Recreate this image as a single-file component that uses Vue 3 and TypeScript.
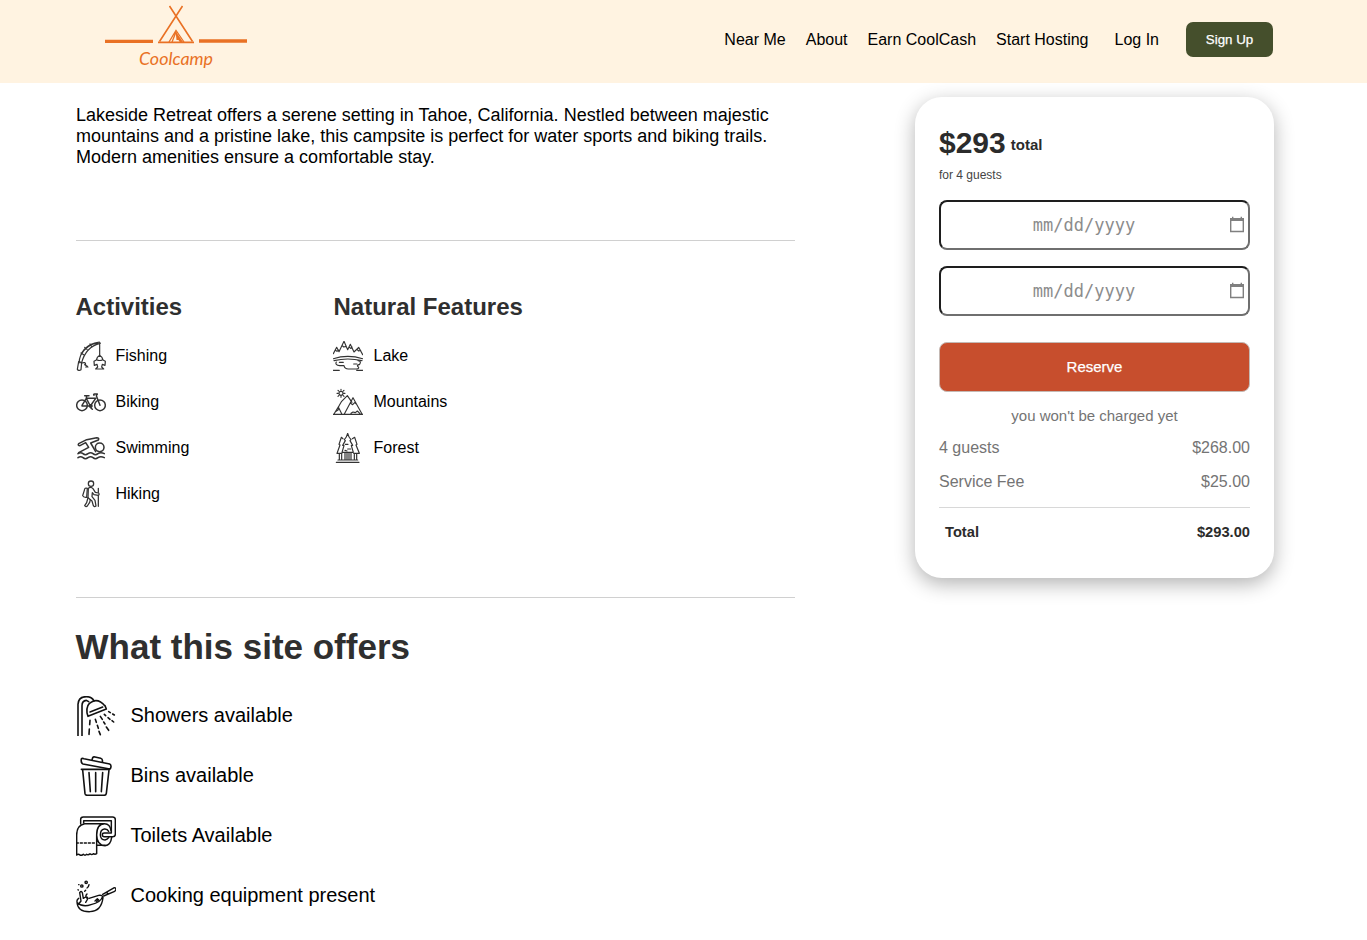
<script setup lang="ts">
interface Item {
  label: string
  box: string
  weight: number
  paths: string[]
}

const links: string[] = ['Near Me', 'About', 'Earn CoolCash', 'Start Hosting']

const activities: Item[] = [
  {
    label: 'Fishing',
    box: '18 18 90 90',
    weight: 3.6,
    paths: [
      'M27 84 C29 56 45 26 88 21 L91 25 C60 32 42 54 34 86 M33 60 C44 40 62 27 84 24 M33 54 l8 5 M44 37 l7 6 M60 27 l4 6 M89 24 V60',
      'M26 80 l9 3 -2 21 q-7 5 -11 -1 Z M36 84 q10 -4 11 4 M44 89 l8 5 M47 96 h7',
      'M89 61 q-8 5 -10 14 l-7 4 1 12 8 -3 2 8 -6 6 h24 l-6 -6 2 -8 8 3 1 -12 -7 -4 q-2 -9 -10 -14 Z M80 74 q9 5 18 0',
    ],
  },
  {
    label: 'Biking',
    box: '18 156 90 90',
    weight: 4.4,
    paths: [
      'M52 211 a16 16 0 1 1 -32 0 a16 16 0 1 1 32 0 M106 211 a16 16 0 1 1 -32 0 a16 16 0 1 1 32 0',
      'M36 211 L49 190 L61 213 H36 M49 190 H77 L61 213 M44 182 h13 M50 182 l-1 8 M74 177 h8 l-3 5 11 29 M74 177 q-5 1 -2 4 M62 209 a4 4 0 1 0 .1 0 M62 218 l5 5',
    ],
  },
  {
    label: 'Swimming',
    box: '18 24 90 90',
    weight: 4.6,
    paths: [
      'M102 67 a13 13 0 1 1 -26 0 a13 13 0 1 1 26 0',
      'M26 83 L56 67 L47 53 L30 62 Q22 62 26 56 L50 44 L80 38 Q89 39 85 45 L62 54 L77 80',
      'M24 86 q8 -6 15 0 t15 0 t15 0 t15 0 t19 0 M24 98 q8 -6 15 0 t15 0 t15 0 t15 0 t19 0',
    ],
  },
  {
    label: 'Hiking',
    box: '18 162 90 90',
    weight: 3.8,
    paths: [
      'M71 176 a8 8 0 1 1 -16 0 a8 8 0 1 1 16 0',
      'M55 190 q8 -6 14 1 l7 11 10 2 q3 5 -1 7 l-13 -2 -5 -6 -1 12 9 11 3 17 q-5 4 -8 -1 l-4 -14 -12 -10 Z',
      'M52 190 q-8 -3 -9 6 l-5 16 q2 6 12 5 Z M54 218 l-4 15 -6 9 q4 5 8 1 l7 -11 2 -8 M85 190 V202 M85 213 V244',
    ],
  },
]

const features: Item[] = [
  {
    label: 'Lake',
    box: '24 18 90 90',
    weight: 3.4,
    paths: [
      'M25 56 L35 37 L42 50 L57 19 L68 44 L76 28 L87 51 L101 37 L113 59 M31 46 l5 3 5 -4 M51 31 l5 5 8 -2 M72 36 l5 4 4 -4 M96 43 l5 5 6 -2',
      'M25 71 Q68 57 113 71 M27 77 Q68 67 111 77',
      'M34 81 q-5 9 10 11 h13 q2 10 13 10 h24 q11 -1 5 -7 q-5 -4 5 -7 q6 -10 -5 -11 M43 82 h12 M86 87 h10 M25 106 h18 M95 106 h18',
    ],
  },
  {
    label: 'Mountains',
    box: '24 156 90 90',
    weight: 3.4,
    paths: [
      'M24 238 H113 M27 237 L43 211 L50 199 L67 182 L81 202 M58 237 L84 188 L111 237 M40 216 l10 20 M31 230 l9 -6 M76 204 l7 5 6 -6 6 5 M78 235 l6 -4 7 2 6 -5 8 8',
      'M54 175 a6 6 0 1 1 -12 0 a6 6 0 1 1 12 0 M48 163 v3 M48 184 v3 M36 175 h3 M57 175 h3 M39 166 l2 2 M55 182 l2 2 M57 166 l-2 2 M41 182 l-2 2',
    ],
  },
  {
    label: 'Forest',
    box: '24 294 90 90',
    weight: 3.6,
    paths: [
      'M68 295 Q65 307 58 314 l3 3 -8 14 4 1 -6 20 H85 l-6 -20 4 -1 -8 -14 3 -3 Q71 307 68 295 Z',
      'M54 311 l-5 -4 -7 21 3 2 -9 25 H51 M82 311 l7 -4 7 21 -3 2 10 25 H86',
      'M34 382 H102 M39 375 H98 M43 358 v17 M50 358 v17 M60 354 v21 M66 354 v21 M72 354 v21 M78 354 v21 M88 358 v17 M95 358 v17 M61 328 h8 M68 342 h9 M60 346 l6 2',
    ],
  },
]

const offers: Item[] = [
  {
    label: 'Showers available',
    box: '18 18 120 120',
    weight: 4.8,
    paths: [
      'M24 137 V43 Q25 20 49 20 Q66 20 72 33 M36 137 V47 Q36 32 49 31 L56 35',
      'M51 69 Q48 42 66 35 Q86 25 105 48 M60 66 L98 51 M51 69 L54 79 L109 57 L105 47',
      'M60 91 l-1 13 M58 117 l-1 16 M76 88 l3 9 M82 106 l3 9 M87 124 l4 10 M91 79 l6 9 M101 96 l4 6 M109 111 l7 10 M103 73 l4 4 M114 83 l6 5 M126 92 l5 4 M116 65 l5 3 M128 72 l5 3',
    ],
  },
  {
    label: 'Bins available',
    box: '18 198 120 120',
    weight: 4.8,
    paths: [
      'M34 207 Q36 204 42 206 L119 222 Q125 225 122 234 Q121 238 115 236 L39 222 Q32 219 34 207 Z',
      'M66 210 l2 -7 q2 -3 7 -2 l17 4 q7 2 5 11 M34 238 H119 M38 240 L45 311 Q46 316 52 316 H102 Q108 316 109 310 L117 240',
      'M57 248 L61 305 M77 248 V305 M98 248 L94 305',
    ],
  },
  {
    label: 'Toilets Available',
    box: '18 33 120 120',
    weight: 4.4,
    paths: [
      'M32 57 V43 Q32 36 40 36 H128 Q136 36 136 44 V88 Q136 95 128 95 H103 Q97 95 97 89 Q97 84 103 84 H124 V47 H41 V54',
      'M104 56 H44 Q20 60 20 90 V150 q5 -5 10 0 q5 3 10 -2 q5 5 10 0 q5 3 10 -2 q5 5 10 0 q5 3 10 0 V90 M20 114 h5 M31 114 h6 M43 114 h6 M55 114 h6 M67 114 h6 M80 90 Q80 56 104 56 Q120 56 123 77 M80 90 Q81 121 105 122 Q122 121 125 97 M80 121 H105',
      'M116 79 Q112 71 103 72 Q91 74 91 90 Q92 105 105 105 Q112 104 116 98',
    ],
  },
  {
    label: 'Cooking equipment present',
    box: '18 213 120 120',
    weight: 4.2,
    paths: [
      'M21 290 Q22 321 60 320 Q94 319 99 278 Q98 269 86 271 L57 280 M21 290 Q20 284 26 280 M22 293 Q38 308 63 299 Q93 292 98 274',
      'M98 268 L133 248 Q138 248 138 255 L134 259 L101 273 M110 261 l4 6',
      'M26 297 l7 -9 -4 -25 q5 -7 8 0 l3 17 7 -4 q7 -1 6 6 l-6 10 M51 267 q-7 7 0 13 M52 232 a3.5 3.5 0 1 1 -7 0 a3.5 3.5 0 1 1 7 0 M39 243 a3.5 3.5 0 1 1 -7 0 a3.5 3.5 0 1 1 7 0 M26 239 h1 M57 239 q-1 7 -6 10 M44 259 l3 -3 M24 254 l1 1 M75 288 l7 -7 4 4 -6 4',
    ],
  },
]

const dates: string[] = ['check-in', 'check-out']
</script>

<template>
  <div class="page">
    <header class="header">
      <svg class="logo" width="150" height="83" viewBox="0 0 150 83">
        <g fill="none" stroke="#e97124">
          <path d="M4 41.4 H52 M98 41 H146" stroke-width="3.4" />
          <path d="M68.5 6 L91.5 41.5 M81.5 6 L58.5 41.5" stroke-width="1.6" />
          <path d="M57 42.4 H93" stroke-width="1.9" />
          <path d="M68 42 L75 30.5 L83 42 M71 42 L75 32" stroke-width="1.3" />
        </g>
        <path d="M74.5 31 L75.5 40 L77.5 40 L79 42.5 L82 42 Z" fill="#e97124" />
        <text x="38" y="65" textLength="74" lengthAdjust="spacingAndGlyphs">Coolcamp</text>
      </svg>
      <nav class="nav">
        <a v-for="link in links" :key="link">{{ link }}</a>
        <a class="login">Log In</a>
        <button class="signup">Sign Up</button>
      </nav>
    </header>

    <main class="main">
      <div class="details">
        <p class="about">
          Lakeside Retreat offers a serene setting in Tahoe, California. Nestled between majestic<br />
          mountains and a pristine lake, this campsite is perfect for water sports and biking trails.<br />
          Modern amenities ensure a comfortable stay.
        </p>
        <div class="columns">
          <section class="column">
            <h2>Activities</h2>
            <div v-for="item in activities" :key="item.label" class="small-item">
              <svg width="30" height="30" :viewBox="item.box" :stroke-width="item.weight">
                <path v-for="d in item.paths" :key="d" :d="d" />
              </svg>
              <span>{{ item.label }}</span>
            </div>
          </section>
          <section class="column">
            <h2>Natural Features</h2>
            <div v-for="item in features" :key="item.label" class="small-item shifted">
              <svg width="30" height="30" :viewBox="item.box" :stroke-width="item.weight">
                <path v-for="d in item.paths" :key="d" :d="d" />
              </svg>
              <span>{{ item.label }}</span>
            </div>
          </section>
        </div>
        <section class="offers">
          <h1>What this site offers</h1>
          <div v-for="item in offers" :key="item.label" class="offer">
            <svg width="40" height="40" :viewBox="item.box" :stroke-width="item.weight">
              <path v-for="d in item.paths" :key="d" :d="d" />
            </svg>
            <span>{{ item.label }}</span>
          </div>
        </section>
      </div>

      <aside class="card">
        <div class="price"><strong>$293</strong><b>total</b></div>
        <div class="for">for 4 guests</div>
        <div v-for="name in dates" :key="name" class="date">
          <span>mm/dd/yyyy</span>
          <svg width="16" height="18" viewBox="0 0 16 18">
            <path d="M1.7 4 H14.3 V15.5 H1.7 Z" fill="none" stroke="#808080" stroke-width="1.4" />
            <path d="M1 2 H15 V5 H1 Z M3 .8 H4.4 V3 H3 Z M11.6 .8 H13 V3 H11.6 Z" fill="#808080" />
          </svg>
        </div>
        <button class="reserve">Reserve</button>
        <div class="note">you won't be charged yet</div>
        <div class="row"><span>4 guests</span><span>$268.00</span></div>
        <div class="row"><span>Service Fee</span><span>$25.00</span></div>
        <div class="total"><span>Total</span><span>$293.00</span></div>
      </aside>
    </main>
  </div>
</template>

<style>
html,
body {
  margin: 0;
  background: #fff;
  overflow: hidden;
}
</style>

<style scoped>
.page {
  width: 1367px;
  height: 940px;
  overflow: hidden;
  background: #fff;
  color: #000;
  font-family: "Liberation Sans", Arial, sans-serif;
  font-size: 16px;
}
.header {
  display: flex;
  justify-content: space-between;
  height: 83px;
  box-sizing: border-box;
  padding: 0 94px 0 101px;
  background: #fff3e1;
}
.logo {
  display: block;
}
.logo text {
  fill: #e97124;
  font: italic 18px Lato, sans-serif;
}
.nav {
  display: flex;
  align-items: center;
  gap: 20px;
  height: 79px;
}
.login {
  margin-left: 6px;
}
.signup {
  width: 87px;
  height: 35px;
  margin-left: 7px;
  padding: 0;
  border: 0;
  border-radius: 7px;
  background: #454f2c;
  color: #fff;
  font: 13.333px "Liberation Sans", Arial, sans-serif;
  -webkit-text-stroke: 0.25px #fff;
}
.main {
  display: flex;
  align-items: flex-start;
  justify-content: space-between;
  padding: 14px 93px 0 76px;
}
.details {
  width: 719px;
}
.about {
  height: 135px;
  margin: 0;
  padding-top: 8px;
  border-bottom: 1px solid #d0d0d0;
  font-size: 18px;
  line-height: 21px;
  text-indent: -0.5px each-line;
  white-space: nowrap;
}
.columns {
  display: flex;
  height: 304px;
  padding-top: 52px;
  border-bottom: 1px solid #d0d0d0;
}
.column {
  width: 258px;
}
h1,
h2 {
  margin: 0;
  color: #2f2f2f;
  text-indent: -0.5px;
}
h2 {
  margin-bottom: 20px;
  font-size: 24px;
  line-height: 28px;
  white-space: nowrap;
}
.small-item {
  display: flex;
  align-items: center;
  gap: 9.5px;
  height: 30px;
  margin-bottom: 16px;
}
.shifted {
  gap: 10.5px;
  margin-left: -1px;
}
.small-item svg,
.offer svg {
  display: block;
  flex: none;
  fill: none;
  stroke: #333;
  stroke-linecap: round;
  stroke-linejoin: round;
}
.offers {
  padding-top: 28px;
}
h1 {
  margin-bottom: 28px;
  font-size: 35px;
  line-height: 42px;
}
.offer {
  display: flex;
  align-items: center;
  gap: 14.5px;
  height: 40px;
  margin-bottom: 20px;
  font-size: 20px;
}
.offer span {
  padding-bottom: 2px;
}
.offer svg {
  stroke: #111;
}
.card {
  box-sizing: border-box;
  width: 359px;
  height: 481px;
  padding: 28px 24px 0;
  border-radius: 27px;
  background: #fff;
  box-shadow: 0 6px 20px rgba(0, 0, 0, 0.3);
}
.price {
  display: flex;
  align-items: center;
  gap: 5px;
  height: 36px;
  color: #2b2b2b;
}
.price strong {
  font-size: 30px;
}
.price b {
  padding-top: 2px;
  font-size: 15px;
}
.for {
  margin: 7px 0 18px;
  color: #444;
  font-size: 12px;
  line-height: 14px;
}
.date {
  display: flex;
  align-items: center;
  box-sizing: border-box;
  height: 50px;
  margin-bottom: 16px;
  padding-right: 3px;
  border: 2px solid;
  border-color: #1e1e1e #6f6f6f #6f6f6f #1e1e1e;
  border-radius: 8px;
  color: #8c8c8c;
  font: 17px "DejaVu Sans Mono", monospace;
}
.date span {
  flex: 1;
  padding-right: 2px;
  text-align: center;
}
.date svg {
  display: block;
}
.reserve {
  display: block;
  width: 311px;
  height: 50px;
  margin-top: 26px;
  padding: 0 0 2px;
  border: 1px solid #c4b9b4;
  border-radius: 8px;
  background: #c74e2d;
  color: #fff;
  font: 15px "Liberation Sans", Arial, sans-serif;
  -webkit-text-stroke: 0.25px #fff;
}
.note {
  margin-top: 15px;
  color: #747474;
  font-size: 15px;
  line-height: 18px;
  text-align: center;
}
.row,
.total {
  display: flex;
  justify-content: space-between;
}
.row {
  height: 20px;
  margin-top: 13px;
  color: #747474;
  line-height: 20px;
}
.row + .row {
  margin-top: 14px;
}
.total {
  margin-top: 15px;
  padding: 15px 0 0 6px;
  border-top: 1px solid #d8d8d8;
  color: #2b2b2b;
  font-size: 14.7px;
  font-weight: 700;
  line-height: 18px;
}
</style>
